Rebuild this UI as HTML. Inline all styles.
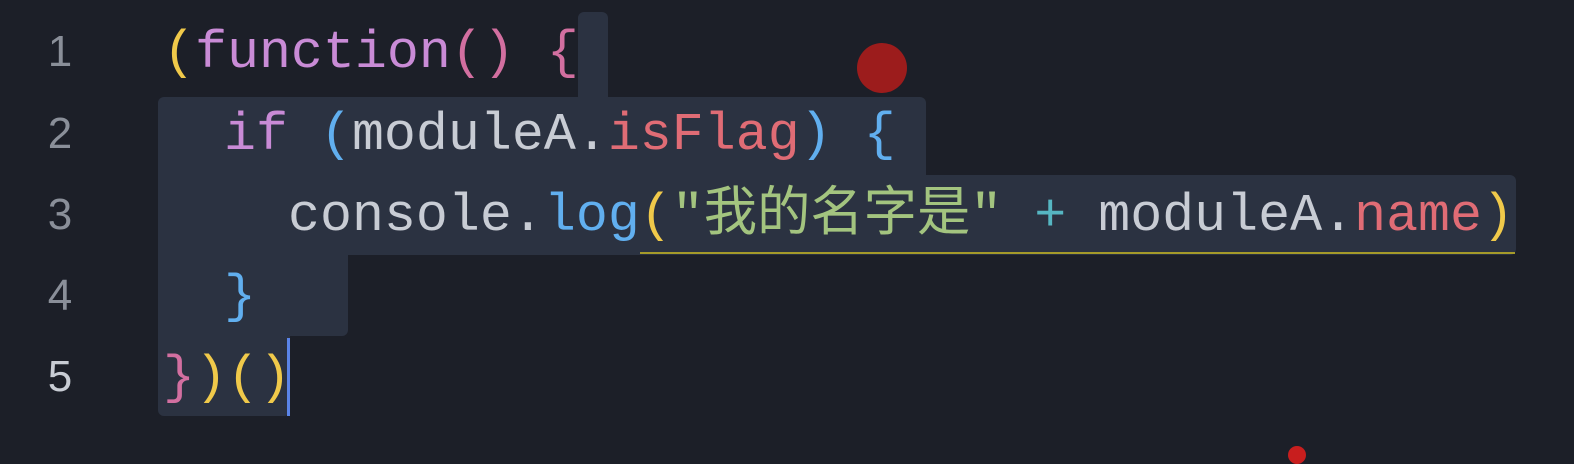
<!DOCTYPE html>
<html><head><meta charset="utf-8"><style>
html,body{margin:0;padding:0;}
body{width:1574px;height:454px;background:#1c1f28;position:relative;overflow:hidden;font-family:"Liberation Mono","Noto Sans CJK SC",monospace;}
.sel{position:absolute;background:#2b3241;}
.ln{position:absolute;left:40px;width:40px;text-align:center;color:#8a8f99;font-size:44px;font-family:"Liberation Sans",sans-serif;line-height:80px;}
.code{position:absolute;font-size:53.3px;line-height:80px;white-space:pre;color:#c8ccd4;}
.p{color:#c98bd6}.y{color:#f0c94a}.b{color:#61afef}.r{color:#e06c75}.g{color:#a3c47f}.c{color:#56b6c2}.pk{color:#d26fa0}.w{color:#c8ccd4}
</style></head><body>
<div class="sel" style="left:578px;top:12px;width:30px;height:90px;border-radius:6px 6px 0 0"></div>
<div class="sel" style="left:158px;top:97px;width:768px;height:80px;border-radius:6px 6px 0 0"></div>
<div class="sel" style="left:158px;top:175px;width:1358px;height:80px;border-radius:0 6px 6px 0"></div>
<div class="sel" style="left:158px;top:254px;width:190px;height:82px;border-radius:0 0 6px 0"></div>
<div class="sel" style="left:158px;top:334px;width:132px;height:82px;border-radius:0 0 6px 6px"></div>
<div style="position:absolute;left:857px;top:43px;width:50px;height:50px;border-radius:50%;background:#9c1c1c"></div>
<div style="position:absolute;left:1288px;top:446px;width:18px;height:18px;border-radius:50%;background:#c81e1e"></div>
<div style="position:absolute;left:640px;top:252px;width:875px;height:2px;background:#a59a2a"></div>
<div style="position:absolute;left:287px;top:338px;width:3px;height:78px;background:#5a84e8"></div>
<div class="ln" style="top:12px">1</div>
<div class="ln" style="top:94px">2</div>
<div class="ln" style="top:175px">3</div>
<div class="ln" style="top:256px">4</div>
<div class="ln" style="top:337px;color:#c8ccd4">5</div>
<div class="code" style="left:163px;top:14px"><span class="y">(</span><span class="p">function</span><span class="pk">()</span> <span class="pk">{</span></div>
<div class="code" style="left:224px;top:96px"><span class="p">if</span> <span class="b">(</span>moduleA.<span class="r">isFlag</span><span class="b">)</span> <span class="b">{</span></div>
<div class="code" style="left:288px;top:177px">console.<span class="b">log</span><span class="y">(</span><span class="g">"我的名字是"</span> <span class="c">+</span> moduleA.<span class="r">name</span><span class="y">)</span></div>
<div class="code" style="left:224px;top:258px"><span class="b">}</span></div>
<div class="code" style="left:163px;top:339px"><span class="pk">}</span><span class="y">)()</span></div>
</body></html>
